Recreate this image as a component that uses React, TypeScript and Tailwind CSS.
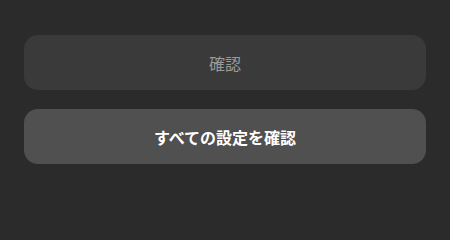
export default function App() {
  return (
    <div
      className="min-h-screen w-full bg-[#2b2b2b] px-6 pt-[35px] flex flex-col gap-[19px]"
      style={{ fontFamily: '"Noto Sans CJK JP", "Noto Sans", sans-serif' }}
    >
      <button className="h-[55px] w-full shrink-0 rounded-[14px] bg-[#3a3a3a] text-[16px] text-[#9a9a9a]">
        確認
      </button>
      <button className="h-[55px] w-full shrink-0 rounded-[14px] bg-[#505050] text-[16px] font-bold text-white">
        すべての設定を確認
      </button>
    </div>
  );
}
